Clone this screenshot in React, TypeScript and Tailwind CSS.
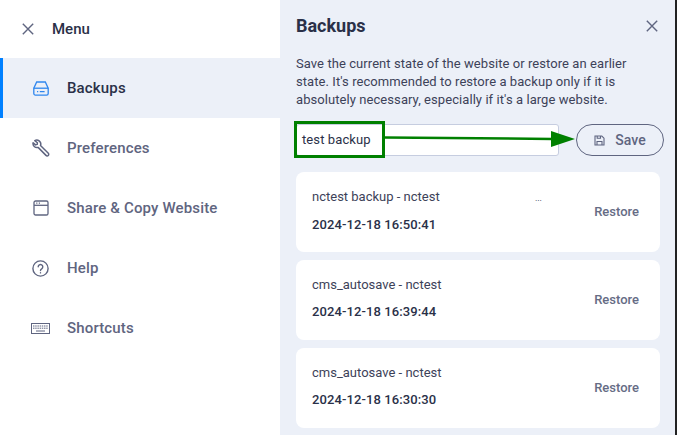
import React from 'react';

function BackupIcon({ className }: { className?: string }) {
  return (
    <svg width="16" height="15" viewBox="0 0 16 15" fill="none" stroke="currentColor" strokeWidth="1.3" className={className}>
      <path d="M3.7 1h8.6l2.9 6.2v5.3a1.6 1.6 0 0 1-1.6 1.6H2.4A1.6 1.6 0 0 1 .8 12.500V7.200z" />
      <path d="M.8 7.200h14.400" />
      <path d="M4 10.600h1.200M6.800 10.600h4.800" />
    </svg>
  );
}

function WrenchIcon() {
  return (
    <svg width="18" height="18" viewBox="0 0 18 18" fill="none" stroke="currentColor" strokeWidth="1.5" strokeLinejoin="round">
      <path d="M5.500 1.200a4 4 0 0 0-3.200.4l2.600 2.200-.2 1.600-1.700.5L.6 3.700a4 4 0 0 0 5 4.700l7.900 8a1.500 1.500 0 0 0 2.300-2.200L8 6.500a4 4 0 0 0-2.500-5.300z" transform="translate(.5 0)" />
    </svg>
  );
}

function WindowIcon() {
  return (
    <svg width="16" height="16" viewBox="0 0 16 16" fill="none" stroke="currentColor" strokeWidth="1.3">
      <rect x="1" y="1" width="14" height="14" rx="1.600" />
      <path d="M1 5.300h14" />
      <path d="M3.200 3.200h1.200M5.800 3.200h1.200" />
    </svg>
  );
}

function HelpIcon() {
  return (
    <svg width="17" height="17" viewBox="0 0 17 17" fill="none" stroke="currentColor" strokeWidth="1.400" strokeLinecap="round">
      <circle cx="8.500" cy="8.500" r="7.600" />
      <path d="M6.200 6.800a2.300 2.300 0 1 1 3.500 2c-.8.500-1.200.9-1.200 1.700" />
      <path d="M8.500 12.800v.1" />
    </svg>
  );
}

function KeyboardIcon() {
  return (
    <svg width="19" height="11" viewBox="0 0 19 11" fill="none" stroke="currentColor" strokeWidth="1">
      <rect x=".5" y=".5" width="18" height="10" />
      <path d="M2 3h15M2 5.200h15" strokeDasharray="1.500 .7" />
      <path d="M5 8h9" />
    </svg>
  );
}

function FloppyIcon() {
  return (
    <svg width="11" height="11" viewBox="0 0 11 11" fill="none" stroke="currentColor" strokeWidth="1.100">
      <path d="M1 1h6.800L10 3.200V10H1z" />
      <path d="M3.200 1v2.200h3.300V1M3 10V6.500h5V10" />
    </svg>
  );
}

function CloseIcon({ size }: { size: number }) {
  return (
    <svg width={size} height={size} viewBox="0 0 12 12" fill="none" stroke="currentColor" strokeWidth="1.400">
      <path d="M.8.800l10.400 10.400M11.200.800L.8 11.200" />
    </svg>
  );
}

function NavItem({ icon, label, active }: { icon: React.ReactNode; label: string; active?: boolean }) {
  return (
    <div className={active ? 'flex h-[60px] items-center border-l-[3px] border-[#0080ff] bg-[#ecf0f8] text-[#2a3048]' : 'flex h-[60px] items-center border-l-[3px] border-transparent text-[#5f6580]'}>
      <span className={active ? 'flex w-[64px] justify-center pl-[11px] text-[#2f86ee]' : 'flex w-[64px] justify-center pl-[11px]'}>{icon}</span>
      <span className="text-[15px] font-medium tracking-[0.15px]">{label}</span>
    </div>
  );
}

function BackupCard({ name, date, dots }: { name: string; date: string; dots?: boolean }) {
  return (
    <div className="flex h-[80px] items-center justify-between rounded-[8px] bg-white pr-[21px] pl-4">
      <div className="w-[230px] pb-[3px]">
        <div className="flex items-baseline justify-between text-[13px] leading-[18px] text-[#3d4259]">
          <span>{name}</span>
          {dots && <span className="text-[9px] text-[#2a3048]">...</span>}
        </div>
        <div className="mt-[9px] text-[13px] leading-[18px] font-medium tracking-[0.1px] text-[#2a3048]">{date}</div>
      </div>
      <span className="text-[13px] font-medium text-[#666c85]">Restore</span>
    </div>
  );
}

export default function App() {
  return (
    <div className="relative flex h-[435px] w-[677px] overflow-hidden bg-white font-['Roboto',sans-serif]">
      <aside className="w-[280px] shrink-0 bg-white">
        <div className="flex h-[58px] items-center pl-[22px] text-[#2a3048]">
          <span className="text-[#5f6580]"><CloseIcon size={12} /></span>
          <span className="ml-[18px] text-[15px] font-medium">Menu</span>
        </div>
        <NavItem active icon={<BackupIcon />} label="Backups" />
        <NavItem icon={<WrenchIcon />} label="Preferences" />
        <NavItem icon={<WindowIcon />} label="Share & Copy Website" />
        <NavItem icon={<HelpIcon />} label="Help" />
        <NavItem icon={<KeyboardIcon />} label="Shortcuts" />
      </aside>

      <main className="flex-1 bg-[#ecf0f8] pr-[15px] pl-4">
        <div className="flex h-[55px] items-center justify-between pb-[4px]">
          <h1 className="text-[18px] font-bold text-[#2a3048]">Backups</h1>
          <span className="mr-[2px] text-[#5f6580]"><CloseIcon size={12} /></span>
        </div>
        <p className="text-[13px] leading-[18px] tracking-[0.07px] text-[#3d4259]">
          Save the current state of the website or restore an earlier
          <br />
          state. It's recommended to restore a backup only if it is
          <br />
          absolutely necessary, especially if it's a large website.
        </p>
        <div className="mt-[15px] flex h-[32px] items-center justify-between">
          <div className="flex h-full w-[263px] items-center rounded-[3px] border border-[#c6cde0] bg-white pl-[5px] text-[13px] tracking-[0.1px] text-[#2a3048]">test backup</div>
          <button className="mr-[-4px] flex h-full w-[88px] items-center justify-center gap-[10px] rounded-full border border-[#5f6580] text-[14px] font-medium text-[#5f6580]">
            <FloppyIcon />
            Save
          </button>
        </div>
        <div className="mt-[16px] flex flex-col gap-[8px]">
          <BackupCard name="nctest backup - nctest" date="2024-12-18 16:50:41" dots />
          <BackupCard name="cms_autosave - nctest" date="2024-12-18 16:39:44" />
          <BackupCard name="cms_autosave - nctest" date="2024-12-18 16:30:30" />
        </div>
      </main>
      <div className="w-[2px] shrink-0 bg-[#222222]" />

      {/* annotation over the input */}
      <div className="absolute top-[121px] left-[294px] h-[37px] w-[91px] border-[3px] border-[#008000]" />
      <svg className="absolute top-[125px] left-[385px]" width="192" height="30" viewBox="0 0 192 30">
        <path d="M0 12.500L168 14" stroke="#008000" strokeWidth="2.500" />
        <path d="M166 6L190 14L166 22z" fill="#008000" />
      </svg>
    </div>
  );
}
